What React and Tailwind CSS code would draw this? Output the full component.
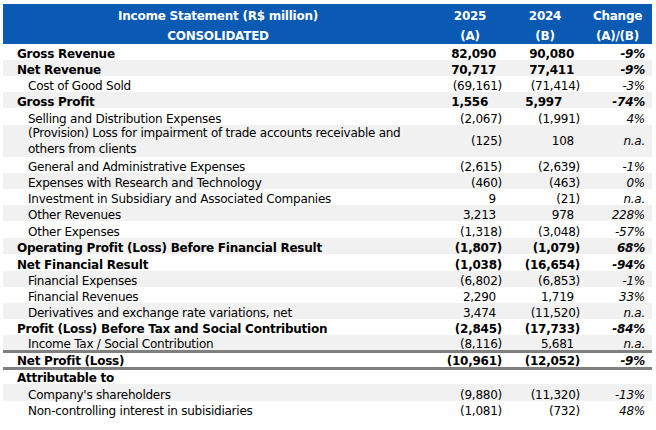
const rows = [
  { label: "Gross Revenue", a: "82,090", b: "90,080", c: "-9%", bold: true, h: "h-[16px]" },
  { label: "Net Revenue", a: "70,717", b: "77,411", c: "-9%", bold: true, h: "h-[16px]" },
  { label: "Cost of Good Sold", a: "(69,161)", b: "(71,414)", c: "-3%", h: "h-[16px]" },
  { label: "Gross Profit", a: "1,556", b: "5,997", c: "-74%", bold: true, h: "h-[16px]" },
  { label: "Selling and Distribution Expenses", a: "(2,067)", b: "(1,991)", c: "4%", h: "h-[17px]" },
  {
    label: "(Provision) Loss for impairment of trade accounts receivable and others from clients",
    a: "(125)",
    b: "108",
    c: "n.a.",
    tall: true,
    h: "h-[32px]",
  },
  { label: "General and Administrative Expenses", a: "(2,615)", b: "(2,639)", c: "-1%", h: "h-[16px]" },
  { label: "Expenses with Research and Technology", a: "(460)", b: "(463)", c: "0%", h: "h-[16px]" },
  { label: "Investment in Subsidiary and Associated Companies", a: "9", b: "(21)", c: "n.a.", h: "h-[16px]" },
  { label: "Other Revenues", a: "3,213", b: "978", c: "228%", h: "h-[16px]" },
  { label: "Other Expenses", a: "(1,318)", b: "(3,048)", c: "-57%", h: "h-[17px]" },
  { label: "Operating Profit (Loss) Before Financial Result", a: "(1,807)", b: "(1,079)", c: "68%", bold: true, h: "h-[16px]" },
  { label: "Net Financial Result", a: "(1,038)", b: "(16,654)", c: "-94%", bold: true, h: "h-[17px]" },
  { label: "Financial Expenses", a: "(6,802)", b: "(6,853)", c: "-1%", h: "h-[16px]" },
  { label: "Financial Revenues", a: "2,290", b: "1,719", c: "33%", h: "h-[16px]" },
  { label: "Derivatives and exchange rate variations, net", a: "3,474", b: "(11,520)", c: "n.a.", h: "h-[16px]" },
  { label: "Profit (Loss) Before Tax and Social Contribution", a: "(2,845)", b: "(17,733)", c: "-84%", bold: true, h: "h-[16px]" },
  { label: "Income Tax / Social Contribution", a: "(8,116)", b: "5,681", c: "n.a.", h: "h-[15px]" },
  { rule: true },
  { label: "Net Profit (Loss)", a: "(10,961)", b: "(12,052)", c: "-9%", bold: true, h: "h-[14px]", plain: true },
  { rule: true },
  { label: "Attributable to", a: "", b: "", c: "", bold: true, plain: true, h: "h-[14px]" },
  { label: "Company's shareholders", a: "(9,880)", b: "(11,320)", c: "-13%", shade: true, h: "h-[17px]" },
  { label: "Non-controlling interest in subisidiaries", a: "(1,081)", b: "(732)", c: "48%", plain: true, h: "h-[16px]" },
];

// positive values sit a little left of the closing paren, like Excel's accounting format
function Num({ value, pad }) {
  const positive = value && !value.startsWith("(");
  return <span className={positive ? pad || "pr-[6px]" : ""}>{value}</span>;
}

export default function App() {
  let n = 0;
  return (
    <div className="w-[656px] h-[430px] bg-white pt-[4px] pl-[3px] font-['DejaVu_Sans',sans-serif] text-[12px] tracking-[-0.25px] text-black">
      <table className="w-[649px] border-collapse table-fixed">
        <colgroup>
          <col className="w-[430px]" />
          <col className="w-[74px]" />
          <col className="w-[76px]" />
          <col className="w-[69px]" />
        </colgroup>
        <thead>
          <tr className="bg-[#0a59b2] text-white font-bold">
            <th className="h-[20px] p-0 pt-[4px] leading-[16px] text-center">Income Statement (R$ million)</th>
            <th className="h-[20px] p-0 pt-[4px] leading-[16px] text-center">2025</th>
            <th className="h-[20px] p-0 pt-[4px] leading-[16px] text-center">2024</th>
            <th className="h-[20px] p-0 pt-[4px] leading-[16px] text-center">Change</th>
          </tr>
          <tr className="bg-[#0a59b2] text-white font-bold">
            <th className="h-[20px] p-0 pt-[4px] leading-[16px] text-center">CONSOLIDATED</th>
            <th className="h-[20px] p-0 pt-[4px] leading-[16px] text-center">(A)</th>
            <th className="h-[20px] p-0 pt-[4px] leading-[16px] text-center">(B)</th>
            <th className="h-[20px] p-0 pt-[4px] leading-[16px] text-center">(A)/(B)</th>
          </tr>
        </thead>
        <tbody>
          {rows.map((r, i) => {
            if (r.rule) {
              return (
                <tr key={i}>
                  <td colSpan={4} className="h-[3px] p-0 bg-[#808080]" />
                </tr>
              );
            }
            const shaded = r.shade ?? (n++ % 2 === 1 && !r.plain);
            const bg = shaded ? "bg-[#f1f1f1]" : "bg-white";
            const gp = r.label === "Gross Profit";
            const valueAlign = r.tall ? "align-middle" : "align-bottom";
            const lead = r.tall ? "leading-[14px]" : "leading-[11px]";
            return (
              <tr key={i} className={`${bg} ${r.bold ? "font-bold" : ""}`}>
                <td
                  className={`${r.h} p-0 ${r.bold ? "pl-[14px]" : "pl-[25px]"} pr-[20px] align-bottom ${
                    r.tall ? "leading-[16px]" : "leading-[11px]"
                  }`}
                >
                  {r.label}
                </td>
                <td className={`text-right p-0 pr-[5px] ${lead} whitespace-nowrap ${valueAlign}`}>
                  <Num value={r.a} pad={gp ? "pr-[14px]" : null} />
                </td>
                <td className={`text-right p-0 pr-[3px] ${lead} whitespace-nowrap ${valueAlign}`}>
                  <Num value={r.b} pad={gp ? "pr-[18px]" : null} />
                </td>
                <td className={`text-right p-0 pr-[7px] italic ${lead} whitespace-nowrap ${valueAlign}`}>
                  {r.c}
                </td>
              </tr>
            );
          })}
        </tbody>
      </table>
    </div>
  );
}
